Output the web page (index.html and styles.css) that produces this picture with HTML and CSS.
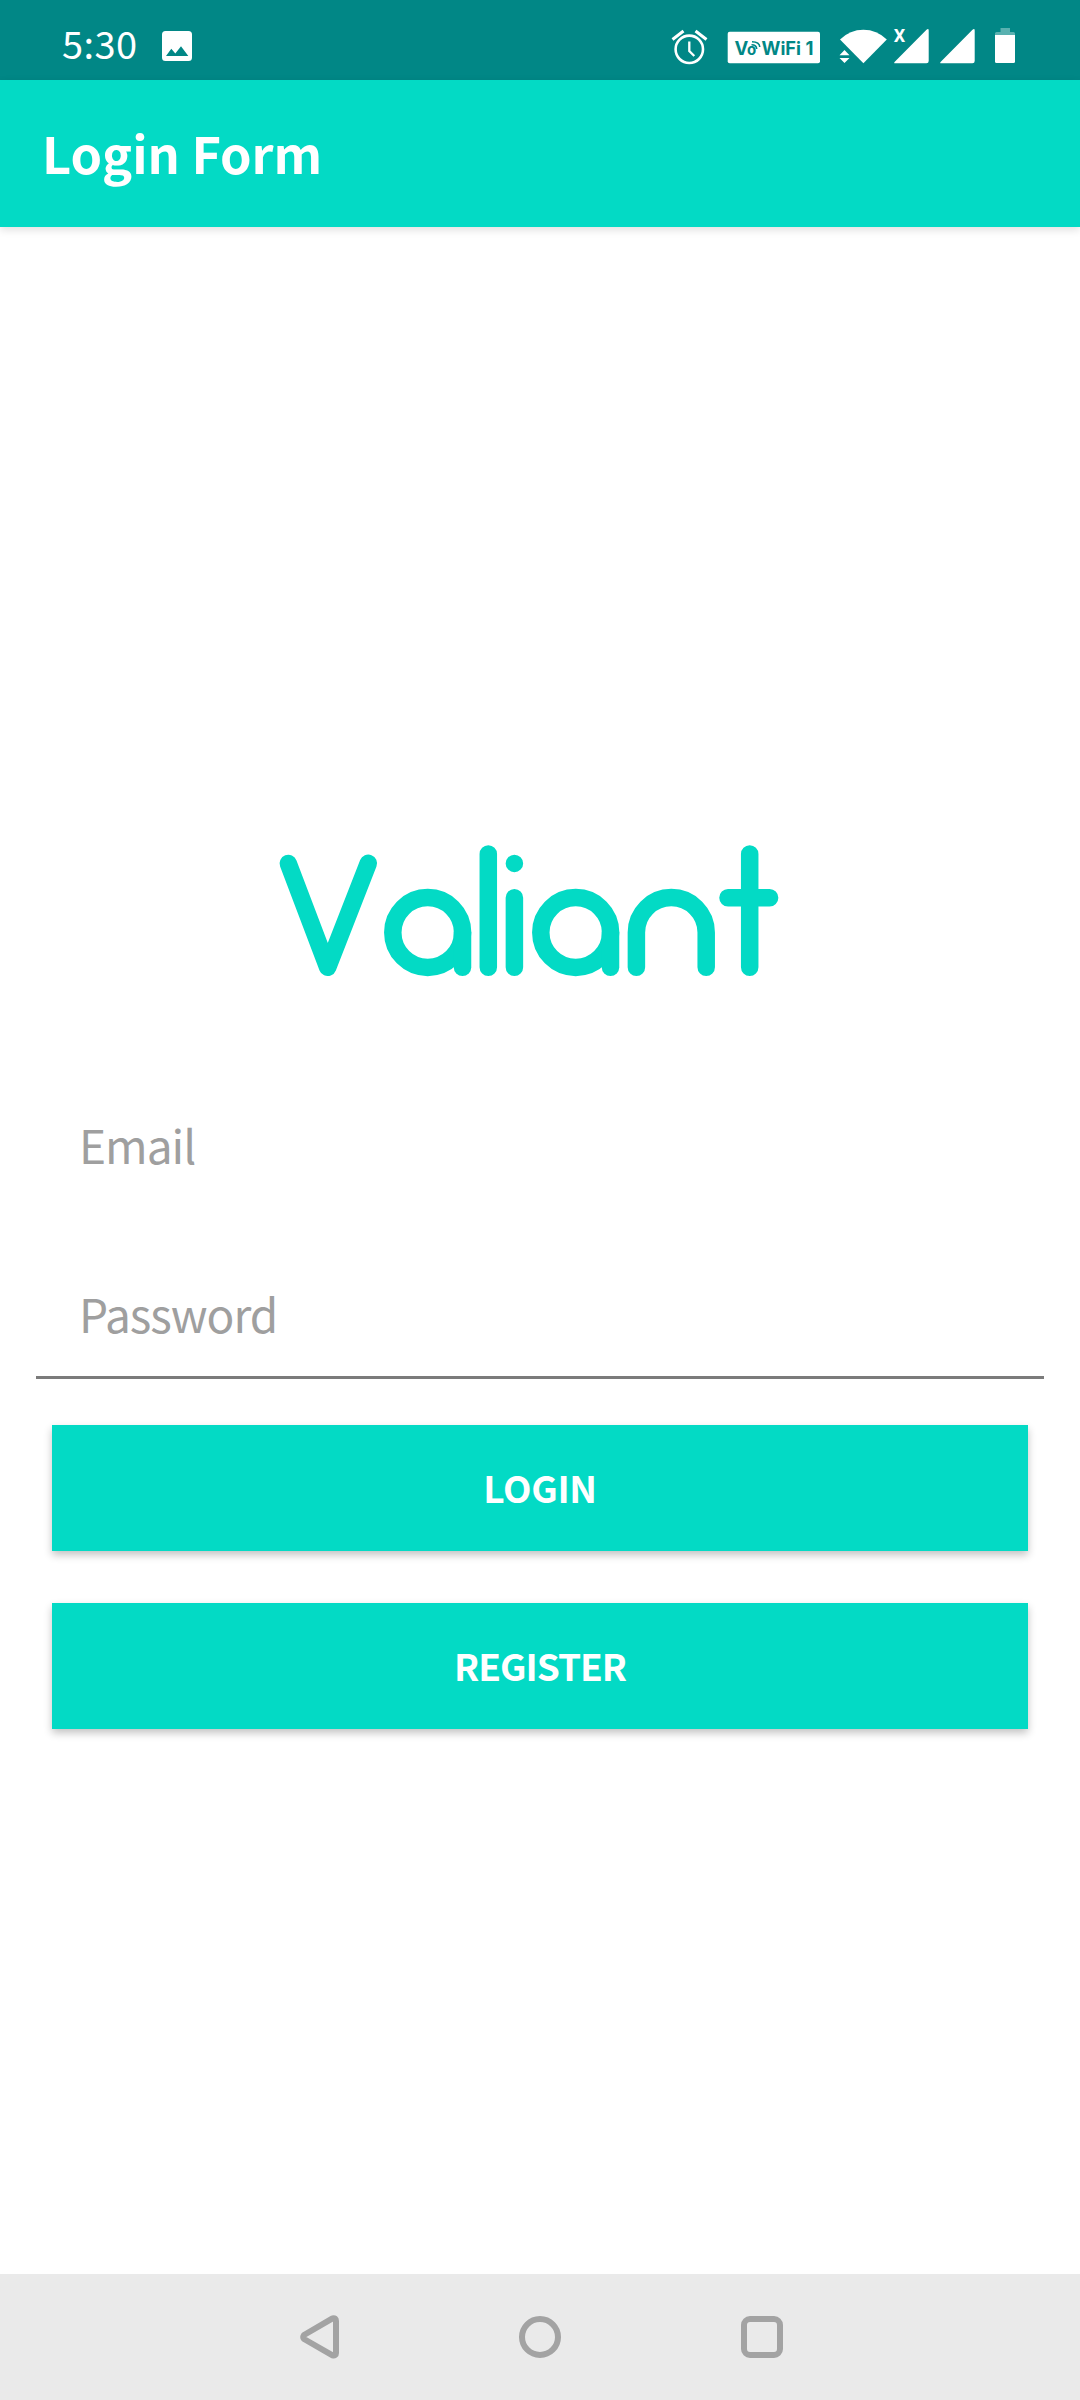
FILE: index.html
```html
<!DOCTYPE html>
<html lang="en">
<head>
<meta charset="utf-8">
<title>Login Form</title>
<link rel="stylesheet" href="styles.css">
</head>
<body>
<div class="screen">
  <header class="status">
    <span class="time">5:30</span>
    <svg class="photo" width="30" height="30" viewBox="0 0 30 30"><path fill="#fff" fill-rule="evenodd" d="M3.500 0h23A3.500 3.500 0 0 1 30 3.500v23a3.500 3.500 0 0 1-3.500 3.500h-23A3.500 3.500 0 0 1 0 26.500v-23A3.500 3.500 0 0 1 3.500 0zM4 25h22.300L19 15.300l-5.700 7.200-4-4.800z"/></svg>
    <svg class="system" width="350" height="48" viewBox="670 24 350 48">
      <g fill="none" stroke="#fff" stroke-width="2.600"><circle cx="689.300" cy="49.300" r="13.700"/><path d="M689.300 41.500v9.500l5 5" stroke-width="2.300"/><path d="M672.500 39.500l11-8.500M706.500 39.500l-11-8.500" stroke-width="3"/></g>
      <rect x="727.700" y="31.800" width="92.300" height="31.400" rx="2" fill="#fff"/>
      <g class="badge"><text x="734.500" y="55">V</text><text class="small" x="747" y="55">o</text><text x="761.500" y="55" textLength="39.500" lengthAdjust="spacingAndGlyphs">WiFi</text><text x="805.500" y="55">1</text></g>
      <g fill="none" stroke="#018786" stroke-width="1.600"><path d="M751.500 44.700q5 0 5.200 4.300M752 41.700q7.500 0 7.800 5.300"/></g>
      <g fill="#fff">
        <path d="M840 39.500Q850 29.800 863.400 29.800T886.800 39.500L863.400 63.300z"/>
        <path d="M839.500 55.300l5-5.300 5 5.300zM839.500 58h10l-5 5z"/>
        <path d="M894.300 63.300V62.300L926.500 29.700Q928.700 28 928.700 30.500V61q0 2.300-2.300 2.300zM940.300 63.300V62.300L972.500 29.700Q974.700 28 974.700 30.500V61q0 2.300-2.300 2.300z"/>
        <path d="M995 35h20v26.500q0 1.500-1.500 1.500h-17q-1.500 0-1.500-1.500z"/>
        <path opacity=".35" d="M995 35v-1.500q0-1.500 1.500-1.500h4v-4h9.500v4h3.500q1.500 0 1.500 1.500V35z"/>
      </g>
      <text class="cross" x="893.800" y="42">X</text>
    </svg>
  </header>
  <div class="appbar"><h1 class="title">Login Form</h1></div>
  <main class="content">
    <svg class="logo" width="508" height="140" viewBox="276 840 508 140" role="img" aria-label="Valiant">
      <g fill="none" stroke="#03dac5" stroke-width="17.500" stroke-linecap="round" stroke-linejoin="round">
        <path d="M288.300 863.500L327.700 967.300L368.300 863.300"/>
        <circle cx="427.700" cy="932.500" r="34.900"/><path d="M462.500 932.500v34.800"/>
        <path d="M488.300 854v113.300M514.400 897.700v69.600M514.400 863.400h.01"/>
        <circle cx="575.700" cy="932.500" r="34.900"/><path d="M610.500 932.500v34.800"/>
        <path d="M636.400 967.300v-34.800a34.900 34.900 0 0 1 69.800 0v34.800"/>
        <path d="M749.700 854v113.300M728 897.700h41.600"/>
      </g>
    </svg>
    <div class="field email">Email</div>
    <div class="field password">Password</div>
    <button class="button login">LOGIN</button>
    <button class="button register">REGISTER</button>
  </main>
  <nav class="navbar">
    <svg width="520" height="60" viewBox="280 2307 520 60" fill="none" stroke="#a3a3a3" stroke-width="6"><path stroke-linejoin="round" d="M304 2335L332.500 2318.300Q336 2317.500 336 2321V2353Q336 2356 332.500 2355.300L304 2339Q302.500 2337 304 2335z"/><circle cx="540" cy="2337" r="18"/><rect x="744" y="2319" width="36" height="36" rx="6"/></svg>
  </nav>
</div>
</body>
</html>
```
FILE: styles.css
```css
* { box-sizing: border-box; }
body { margin: 0; background: #fff; font-family: "Noto Sans CJK SC", "Noto Sans", sans-serif; }
.screen { width: 1080px; height: 2400px; display: flex; flex-direction: column; }
.status { height: 80px; padding: 0 60px 0 62px; background: #018786; color: #fff; display: flex; align-items: center; flex: none; }
.time { width: 100px; font-size: 38px; font-weight: 400; letter-spacing: 0.4px; line-height: 60px; margin-top: 5px; }
.photo { margin-top: 12px; }
.system { margin: 16px 0 0 auto; }
.badge { fill: #018786; font: 700 18.5px Inter, sans-serif; }
.badge .small { font-size: 15px; }
.cross { fill: #fff; font: 700 18px Roboto, sans-serif; }
.appbar { height: 147px; padding: 0 0 4px 42px; background: #03dac5; display: flex; align-items: center; flex: none; box-shadow: 0 3px 8px rgba(0,0,0,.12); }
.title { margin: 0; color: #fff; font-size: 50.5px; font-weight: 700; line-height: 70px; }
.content { flex: 1; display: flex; flex-direction: column; padding: 613px 36px 0; }
.logo { margin-left: 240px; flex: none; }
.field { color: #9f9f9f; font-size: 46px; letter-spacing: -1px; line-height: 60px; padding-left: 43px; }
.email { margin-top: 134px; }
.password { margin-top: 109px; height: 96px; border-bottom: 3px solid #7b7b7b; }
.button { height: 126px; margin: 0 16px; padding: 0 0 3px; border: 0; background: #03dac5; color: #fff; font-family: inherit; font-size: 37px; font-weight: 700; line-height: 50px; box-shadow: 0 4px 8px rgba(0,0,0,.24); flex: none; }
.login { margin-top: 46px; letter-spacing: -0.3px; }
.register { margin-top: 52px; letter-spacing: -1px; }
.navbar { height: 126px; background: #eaeaea; display: flex; align-items: center; justify-content: center; flex: none; }
```
